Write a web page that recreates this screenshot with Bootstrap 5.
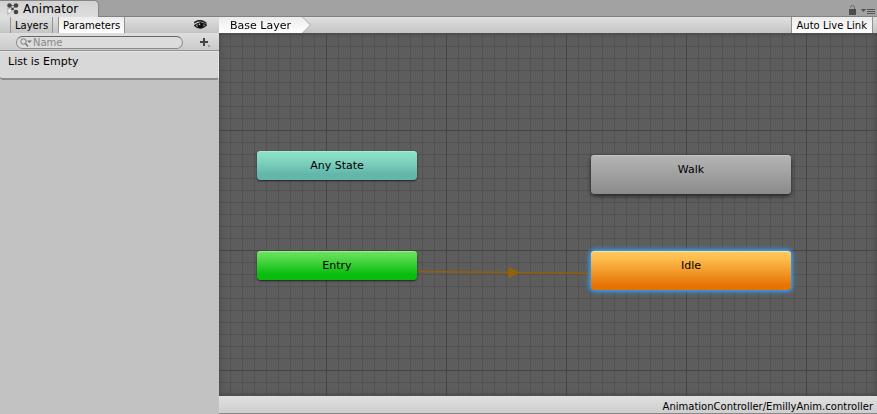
<!DOCTYPE html>
<html lang="en">
<head>
<meta charset="utf-8">
<meta name="viewport" content="width=device-width, initial-scale=1">
<title>Animator</title>
<link rel="stylesheet" href="https://cdn.jsdelivr.net/npm/bootstrap@5.3.0/dist/css/bootstrap.min.css">
<style>
body{font-family:"DejaVu Sans",Verdana,sans-serif;font-size:11px;line-height:14px;color:#000;background:#c2c2c2}
svg{display:block;flex:none}
.titlebar{height:17px;background:#a2a2a2;border-bottom:1px solid #828282}
.window-tab{font:12px/16px "DejaVu Sans",Verdana,sans-serif;height:17px;padding:0 20px 0 7px;margin-bottom:-1px;background:linear-gradient(#d2d2d2,#dedede);border:solid #858585;border-width:1px 1px 0 0;border-radius:0 5px 0 0;color:#000}
.window-tools{padding-right:2px}
.side{width:219px;background:#c2c2c2}
.bar{height:16px;background:linear-gradient(#e0e0e0,#c4c4c4)}
.search-bar{height:18px;padding-top:1px;background:linear-gradient(#dedede,#cbcbcb);border:solid #929292;border-width:0 0 1px}
.tool-btn{font-family:inherit;font-size:10px;line-height:16px;height:16px;padding:1px 5px 0;border:solid #929292;border-width:0 1px;background:none;color:#000;white-space:nowrap}
.tool-btn.active{background:linear-gradient(#ececec,#fff)}
.tabs-group{gap:5px;padding-left:10px}
.tabs-group .tool-btn{padding:1px 4px 0}
.plain-btn{border:0;background:none;padding:0}
.search-field{width:167px;height:13px;border:1px solid #8a8a8a;border-top-color:#666;border-radius:7px;background:#dcdcdc;padding-left:3px;overflow:hidden}
.search-field input{font:10px/11px "DejaVu Sans",Verdana,sans-serif;border:0;outline:0;background:none;padding:0;height:11px;min-width:0;color:#333}
.search-field input::placeholder{color:#888;opacity:1}
.list-box{height:29px;padding:3px 8px;background:#d8d8d8;border:1px solid #e6e6e6;border-left:0;border-bottom:2px solid #8c8c8c;border-radius:0 0 3px 3px}
.crumb-item{filter:drop-shadow(1px 0 0 #aaa)}
.crumb{line-height:16px;height:16px;padding:1px 19px 0 11px;background:linear-gradient(#ececec,#fff);clip-path:polygon(0 0,calc(100% - 8px) 0,100% 50%,calc(100% - 8px) 100%,0 100%);color:#000;text-decoration:none}
.graph{background-color:#5d5d5d;overflow:hidden;
background-image:linear-gradient(90deg,#454545 1px,transparent 1px),linear-gradient(#454545 1px,transparent 1px),linear-gradient(90deg,#525252 1px,transparent 1px),linear-gradient(#525252 1px,transparent 1px);
background-size:120px 120px,120px 120px,12px 12px,12px 12px;background-position:107px 97px,107px 97px,11px 1px,11px 1px;box-shadow:inset 0 0 6px #444}
.node{font:inherit;line-height:14px;position:absolute;border:0;border-radius:4px;padding:8px 0 0;color:#000;display:flex;justify-content:center;align-items:flex-start}
.small-node{width:160px;height:29px;left:38px}
.state-node{width:200px;height:39px;left:372px}
.any{top:118px;background:linear-gradient(#8ce2ca,#88dcc5 20%,#63b7aa 80%);box-shadow:inset 0 1px #a8ead8,0 1px 2px #222}
.entry{top:218px;background:linear-gradient(#6be35f,#5bdc50 20%,#08bd0c 80%);box-shadow:inset 0 1px #95ef8a,0 1px 2px #222}
.walk{top:122px;background:linear-gradient(#b5b5b5,#8b8b8b);box-shadow:inset 0 1px #c7c2c7,0 2px 4px #222}
.idle{top:218px;background:linear-gradient(#ffc95c,#fdbc4c 20%,#e57202 90%);box-shadow:inset 0 1px #ffe1a0,0 0 2px 1px #3a94e4,0 0 4px 2px #3a94e4}
.links{left:0;top:0}
.status{height:18px;padding:4px 4px 0;background:linear-gradient(#e0e0e0,#cecece);border-bottom:1px solid #888;font-size:10px}
</style>
<script src="https://cdn.jsdelivr.net/npm/bootstrap@5.3.0/dist/js/bootstrap.bundle.min.js"></script>
</head>
<body class="d-flex flex-column min-vh-100 overflow-hidden">
<header class="titlebar d-flex justify-content-between align-items-start">
  <button class="window-tab d-flex align-items-center gap-1" type="button">
    <svg width="12" height="12" viewBox="0 0 12 12"><path d="M2.5 2.500h6.500M9 9L4 4M9 3L5 6" stroke="#888"/><g fill="#444"><circle cx="2.500" cy="2.500" r="2.300"/><circle cx="9" cy="2.500" r="2.300"/><circle cx="9" cy="9" r="2.300"/><circle cx="5.500" cy="6" r="1.300"/></g><path d="M1 5v6.500l4-4z" fill="#fff" stroke="#777" stroke-width=".5"/></svg>
    <span>Animator</span>
  </button>
  <div class="window-tools d-flex align-items-center gap-1 pt-1">
    <button class="plain-btn" type="button" aria-label="Lock"><svg width="9" height="10" viewBox="0 0 9 10"><path d="M2.500 2.500C2.500 0 6.500 0 6.500 2.500V5" fill="none" stroke="#606060"/><path d="M1 4h7v6H1z" fill="#4c4c4c"/></svg></button>
    <button class="plain-btn pt-1" type="button" aria-label="Window menu"><svg width="14" height="7" viewBox="0 0 14 7"><path d="M0 1h5L2.500 4z" fill="#4c4c4c"/><path d="M6 1.500h8M6 3.500h8M6 5.500h8" stroke="#555"/></svg></button>
  </div>
</header>
<div class="d-flex flex-fill">
  <aside class="side flex-shrink-0">
    <div class="bar d-flex align-items-center">
      <div class="tabs-group d-flex flex-fill">
        <button class="tool-btn" type="button">Layers</button>
        <button class="tool-btn active" type="button">Parameters</button>
      </div>
      <button class="plain-btn pe-1 me-2" type="button" aria-label="Toggle visibility"><svg width="13" height="10" viewBox="0 0 13 10"><path d="M0 3Q6-2 12.500 3.500" fill="none" stroke="#222" stroke-width="1.500"/><path d="M.5 5.500Q5.500 1 12.500 5Q6.500 11 .5 5.500z" fill="#aaa" stroke="#222" stroke-width="1.300"/><circle cx="6.500" cy="5.200" r="3" fill="#111"/><circle cx="5.500" cy="4.200" r=".8" fill="#ddd"/></svg></button>
    </div>
    <div class="search-bar d-flex align-items-center justify-content-between ps-3 pe-2">
      <label class="search-field d-flex align-items-center">
        <svg width="13" height="9" viewBox="0 0 13 9"><circle cx="3.500" cy="3.500" r="2.700" fill="none" stroke="#777"/><path d="M5.500 5.500L8 8.500" stroke="#777" stroke-width="1.400"/><path d="M7 2.500h5L9.500 5z" fill="#777"/></svg>
        <input class="flex-fill" type="text" placeholder="Name" aria-label="Search parameters by name">
      </label>
      <button class="plain-btn" type="button" aria-label="Add parameter"><svg width="11" height="9" viewBox="0 0 11 9"><path d="M0 4h8M4 0v8" stroke="#444" stroke-width="2"/><path d="M8 8h2" stroke="#666"/></svg></button>
    </div>
    <div class="list-box">List is Empty</div>
  </aside>
  <main class="d-flex flex-column flex-fill">
    <nav class="bar d-flex justify-content-between" aria-label="Layer path">
      <div class="crumb-item d-flex"><a class="crumb d-block" href="#">Base Layer</a></div>
      <button class="tool-btn active me-1" type="button">Auto Live Link</button>
    </nav>
    <section class="graph position-relative flex-fill" aria-label="State graph">
      <svg class="links position-absolute" width="400" height="260" viewBox="0 0 400 260"><path d="M199 238.500L372 240.500" stroke="#926004" stroke-width="1.500"/><path d="M289.500 234v11L300.500 239.500z" fill="#966302"/></svg>
      <button class="node small-node any" type="button">Any State</button>
      <button class="node small-node entry" type="button">Entry</button>
      <button class="node state-node walk" type="button">Walk</button>
      <button class="node state-node idle" type="button">Idle</button>
    </section>
    <footer class="status text-end">AnimationController/EmillyAnim.controller</footer>
  </main>
</div>
</body>
</html>
